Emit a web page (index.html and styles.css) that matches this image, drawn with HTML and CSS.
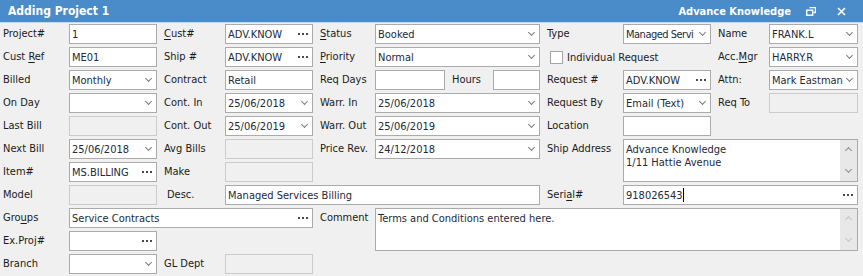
FILE: index.html
```html
<!DOCTYPE html>
<html lang="en">
<head>
    <meta charset="UTF-8">
    <title>Adding Project 1</title>
    <link rel="stylesheet" href="styles.css">
</head>
<body>
    <div class="titlebar">
        <span class="title">Adding Project 1</span>
        <span class="tb-right">
            <span class="company">Advance Knowledge</span>
            <svg class="tb-btn" width="10" height="9" viewBox="0 0 10 9">
                <path d="M3.5 .5h6v5h-2" fill="none" stroke="#fff" stroke-width="1.4"/>
                <rect x=".7" y="3.2" width="6" height="5" fill="none" stroke="#fff" stroke-width="1.4"/>
            </svg>
            <svg class="tb-btn close" width="9" height="9" viewBox="0 0 9 9">
                <path d="M1 1l7 7M8 1L1 8" stroke="#fff" stroke-width="1.6"/>
            </svg>
        </span>
    </div>

    <div class="form">
        <!-- row 1 -->
        <div class="lab first">Project#</div>
        <div class="fld">1</div>
        <div class="lab m"><u>C</u>ust#</div>
        <div class="fld dots">ADV.KNOW</div>
        <div class="lab m"><u>S</u>tatus</div>
        <div class="fld sel">Booked</div>
        <div class="lab m">Type</div>
        <div class="fld sel"><span class="tight">Managed Servi</span></div>
        <div class="lab m">Name</div>
        <div class="fld sel">FRANK.L</div>

        <!-- row 2 -->
        <div class="lab first">Cust <u>R</u>ef</div>
        <div class="fld">ME01</div>
        <div class="lab m">Ship #</div>
        <div class="fld dots">ADV.KNOW</div>
        <div class="lab m"><u>P</u>riority</div>
        <div class="fld sel">Normal</div>
        <div class="check"><span class="box"></span>Individual Request</div>
        <div class="lab m">Acc.<u>M</u>gr</div>
        <div class="fld sel">HARRY.R</div>

        <!-- row 3 -->
        <div class="lab first">Billed</div>
        <div class="fld sel">Monthly</div>
        <div class="lab m">Contract</div>
        <div class="fld">Retail</div>
        <div class="lab m">Req Days</div>
        <div class="pair">
            <div class="fld days"></div>
            <div class="lab m grow">Hours</div>
            <div class="fld hours"></div>
        </div>
        <div class="lab m">Request #</div>
        <div class="fld dots">ADV.KNOW</div>
        <div class="lab m">Attn:</div>
        <div class="fld sel">Mark Eastman</div>

        <!-- row 4 -->
        <div class="lab first">On Day</div>
        <div class="fld sel"></div>
        <div class="lab m">Cont. In</div>
        <div class="fld sel">25/06/2018</div>
        <div class="lab m">Warr. In</div>
        <div class="fld sel">25/06/2018</div>
        <div class="lab m">Request By</div>
        <div class="fld sel">Email (Text)</div>
        <div class="lab m">Req To</div>
        <div class="fld off"></div>

        <!-- row 5 -->
        <div class="lab first">Last Bill</div>
        <div class="fld off"></div>
        <div class="lab m">Cont. Out</div>
        <div class="fld sel">25/06/2019</div>
        <div class="lab m">Warr. Out</div>
        <div class="fld sel">25/06/2019</div>
        <div class="lab m">Location</div>
        <div class="fld"></div>

        <!-- row 6-7 -->
        <div class="lab first">Next Bill</div>
        <div class="fld sel">25/06/2018</div>
        <div class="lab m">Avg Bills</div>
        <div class="fld off"></div>
        <div class="lab m">Price Rev.</div>
        <div class="fld sel">24/12/2018</div>
        <div class="lab m tall">Ship Address</div>
        <div class="memo ship">
            <div class="memo-text">Advance Knowledge<br>1/11 Hattie Avenue</div>
            <div class="scroll"><span class="up"></span><span class="down"></span></div>
        </div>

        <div class="lab first">Item#</div>
        <div class="fld dots">MS.BILLING</div>
        <div class="lab m">Make</div>
        <div class="fld off"></div>

        <!-- row 8 -->
        <div class="lab first">Model</div>
        <div class="fld off"></div>
        <div class="lab m desc">Desc.</div>
        <div class="fld span3">Managed Services Billing</div>
        <div class="lab m">Seri<u>a</u>l#</div>
        <div class="fld dots span3"><span>918026543<span class="caret"></span></span></div>

        <!-- row 9-10 -->
        <div class="lab first">Gro<u>u</u>ps</div>
        <div class="fld dots span3">Service Contracts</div>
        <div class="lab m tall">Comment</div>
        <div class="memo comment">
            <div class="memo-text">Terms and Conditions entered here.</div>
            <div class="scroll dim"><span class="up"></span><span class="down"></span></div>
        </div>

        <div class="lab first">Ex.Proj#</div>
        <div class="fld dots"></div>

        <!-- row 11 -->
        <div class="lab first">Branch</div>
        <div class="fld sel"></div>
        <div class="lab m">GL Dept</div>
        <div class="fld off"></div>
    </div>
</body>
</html>
```

FILE: styles.css
```css
/* Window */
body {
    margin: 0;
    background-color: #f0f0f0;
    font-family: "DejaVu Sans Condensed", Roboto, sans-serif;
    font-size: 11px;
    color: #1b1b1b;
}
.titlebar {
    height: 22px;
    background-color: #4a8bc9;
    border-bottom: 1px solid #c8d8e8;
    display: flex;
    align-items: center;
    justify-content: space-between;
    padding-left: 8px;
    color: #fff;
    font-weight: bold;
}
.title {
    font-size: 12px;
}
.tb-right {
    display: flex;
    align-items: center;
}
.company {
    font-size: 11px;
    margin-right: 15px;
}
.tb-btn {
    margin-right: 21px;
}
.tb-btn.close {
    margin-right: 17px;
}

/* Form grid */
.form {
    display: grid;
    grid-template-columns: 66px 88px 68px 88px 62px 165px 83px 88px 58px 89px;
    grid-auto-rows: 20px;
    row-gap: 3px;
    padding: 1px 0 0 3px;
}
.lab {
    line-height: 20px;
    white-space: nowrap;
}
.lab.first {
    grid-column-start: 1;
}
.lab.m {
    padding-left: 7px;
}
.lab.desc {
    padding-left: 10px;
}
.lab.tall {
    grid-row: span 2;
}
u {
    text-decoration-thickness: 1px;
    text-underline-offset: 2px;
}

/* Editors */
.fld {
    box-sizing: border-box;
    height: 20px;
    background-color: #fff;
    border: 1px solid #ababab;
    padding: 0 4px 0 2px;
    display: flex;
    align-items: center;
    white-space: nowrap;
    overflow: hidden;
    color: #232a3a;
}
.fld.off {
    background-color: #f0f0f0;
    border-color: #cbcbcb;
}
.fld.span3 {
    grid-column: span 3;
}
.tight {
    letter-spacing: -0.5px;
    margin-right: 2px;
}
.sel::after {
    content: "";
    flex: none;
    width: 4px;
    height: 4px;
    border-right: 1.4px solid #7a7a7a;
    border-bottom: 1.4px solid #7a7a7a;
    transform: rotate(45deg);
    margin: -4px 1px 0 auto;
}
.dots::after {
    content: "";
    flex: none;
    width: 10px;
    height: 2px;
    margin-left: auto;
    background: linear-gradient(90deg, #4a4a4a 2px, transparent 2px) 0 0 / 4px 2px repeat-x;
}
.caret {
    display: inline-block;
    width: 1px;
    height: 14px;
    background-color: #000;
    vertical-align: -3px;
}

.pair {
    display: flex;
}
.fld.days {
    width: 70px;
}
.fld.hours {
    width: 47px;
}
.grow {
    flex: 1;
}

.check {
    grid-column: span 2;
    display: flex;
    align-items: center;
    padding-left: 10px;
}
.box {
    box-sizing: border-box;
    width: 13px;
    height: 13px;
    background-color: #fff;
    border: 1px solid #a5a5a5;
    margin-right: 4px;
}

/* Memo boxes */
.memo {
    display: flex;
    grid-row: span 2;
    background-color: #fff;
    border: 1px solid #ababab;
    color: #232a3a;
}
.memo.ship {
    grid-column: span 3;
}
.memo.comment {
    grid-column: span 5;
}
.memo-text {
    flex: 1;
    padding: 3px 2px;
    line-height: 13px;
}
.scroll {
    width: 17px;
    background-color: #e8e8e8;
    display: flex;
    flex-direction: column;
    align-items: center;
    justify-content: space-between;
    padding: 8px 0 9px;
    box-sizing: border-box;
}
.scroll span {
    width: 4px;
    height: 4px;
    border-right: 1.4px solid #8c8c8c;
    border-bottom: 1.4px solid #8c8c8c;
}
.scroll .up {
    transform: rotate(-135deg);
}
.scroll .down {
    transform: rotate(45deg);
}
.scroll.dim span {
    border-color: #c4c4c4;
}
```
